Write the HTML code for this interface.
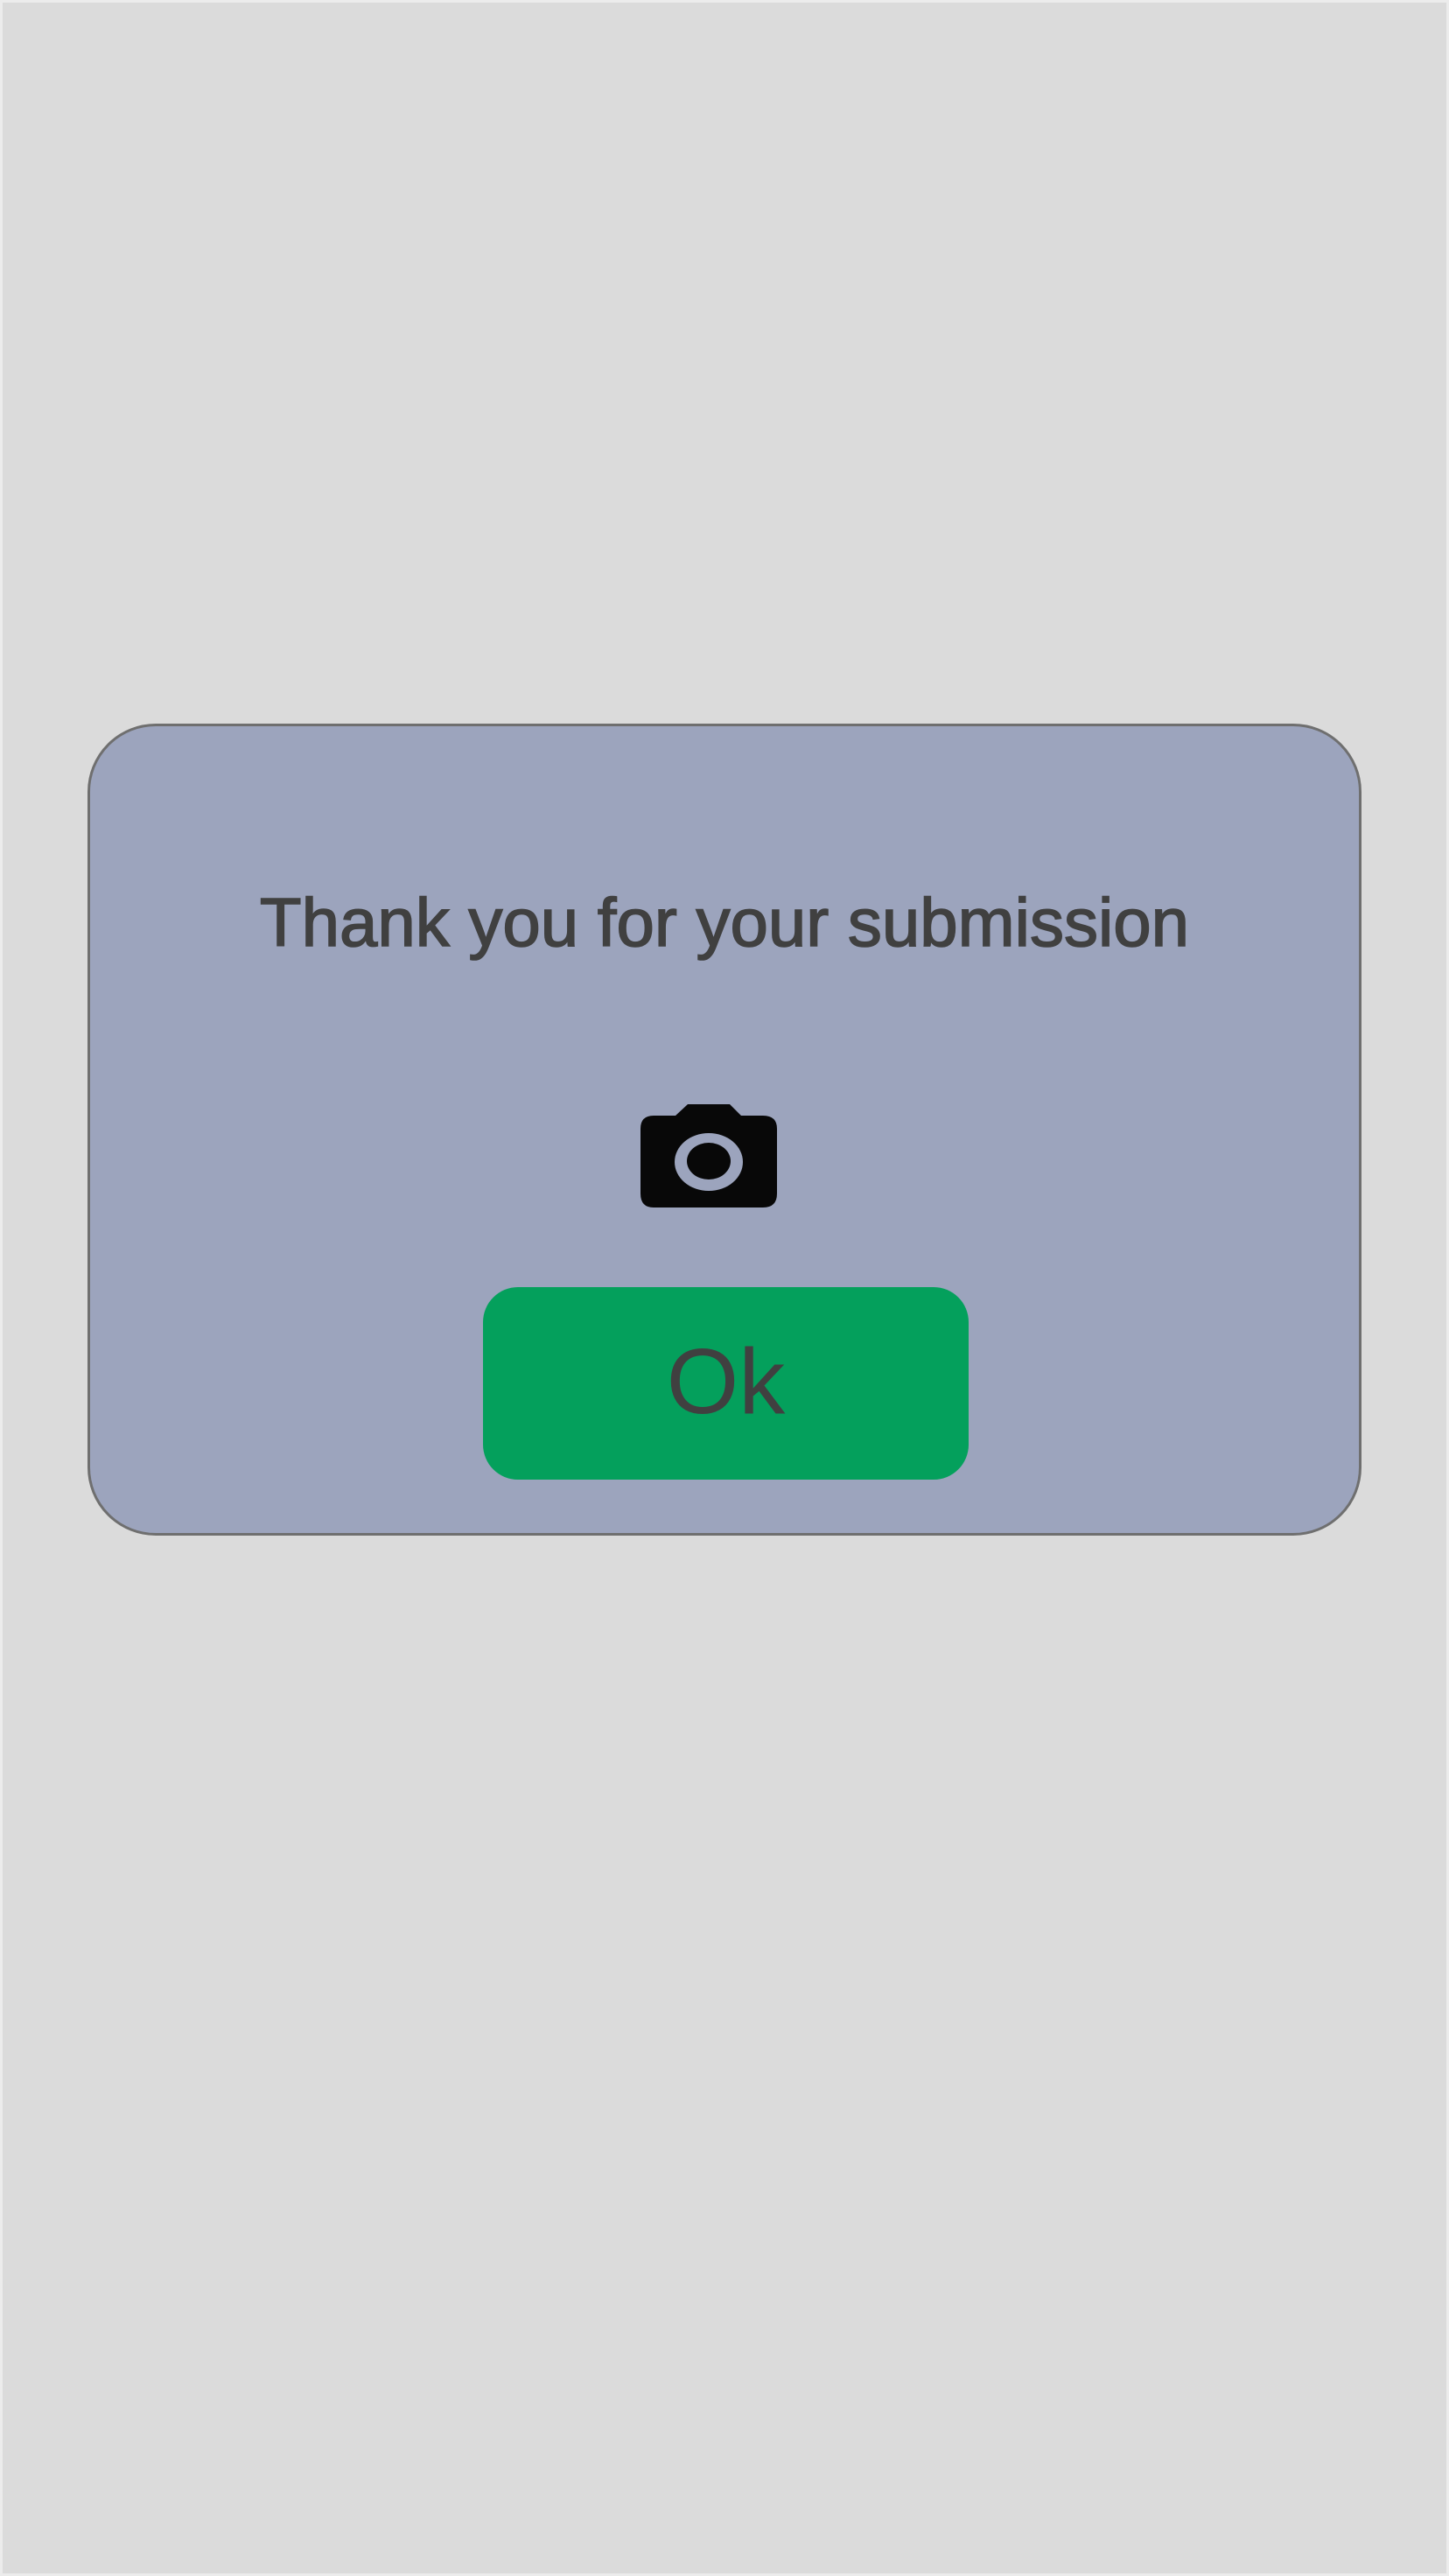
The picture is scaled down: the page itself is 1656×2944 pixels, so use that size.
<!DOCTYPE html>
<html><head><meta charset="utf-8"><style>
html,body{margin:0;padding:0}
body{width:1656px;height:2944px;background:#dbdbdb;position:relative;overflow:hidden;font-family:"Liberation Sans",sans-serif}
.frame{position:absolute;left:0;top:0;width:1650px;height:2938px;border:3px solid #ececec}
.card{position:absolute;left:100px;top:827px;width:1456px;height:928px;background:#9ca4bd;border:3px solid #6f6f6f;border-radius:78px;box-sizing:border-box}
.title{position:absolute;left:0;width:1656px;top:1008px;text-align:center;font-size:78px;line-height:92px;color:#404040;-webkit-text-stroke:1.6px #404040;white-space:nowrap}
.btn{position:absolute;left:552px;top:1471px;width:555px;height:220px;background:#04a05c;border-radius:40px}
.ok{position:absolute;left:552px;width:555px;top:1524px;text-align:center;font-size:106px;line-height:110px;color:#404040}
svg{position:absolute}
</style></head><body>
<div class="frame"></div>
<div class="card"></div>
<div class="title">Thank you for your submission</div>
<svg style="left:700px;top:1240px" width="200" height="160" viewBox="0 0 200 160">
<path d="M86 22 L134 22 L147 35 L172 35 Q188 35 188 50 L188 124 Q188 140 172 140 L47 140 Q32 140 32 124 L32 50 Q32 35 47 35 L72 35 Z" fill="#080808"/>
<ellipse cx="110" cy="88" rx="39" ry="33" fill="#9ca4bd"/>
<ellipse cx="110" cy="87" rx="25" ry="21" fill="#080808"/>
</svg>
<div class="btn"></div>
<div class="ok">Ok</div>
</body></html>
